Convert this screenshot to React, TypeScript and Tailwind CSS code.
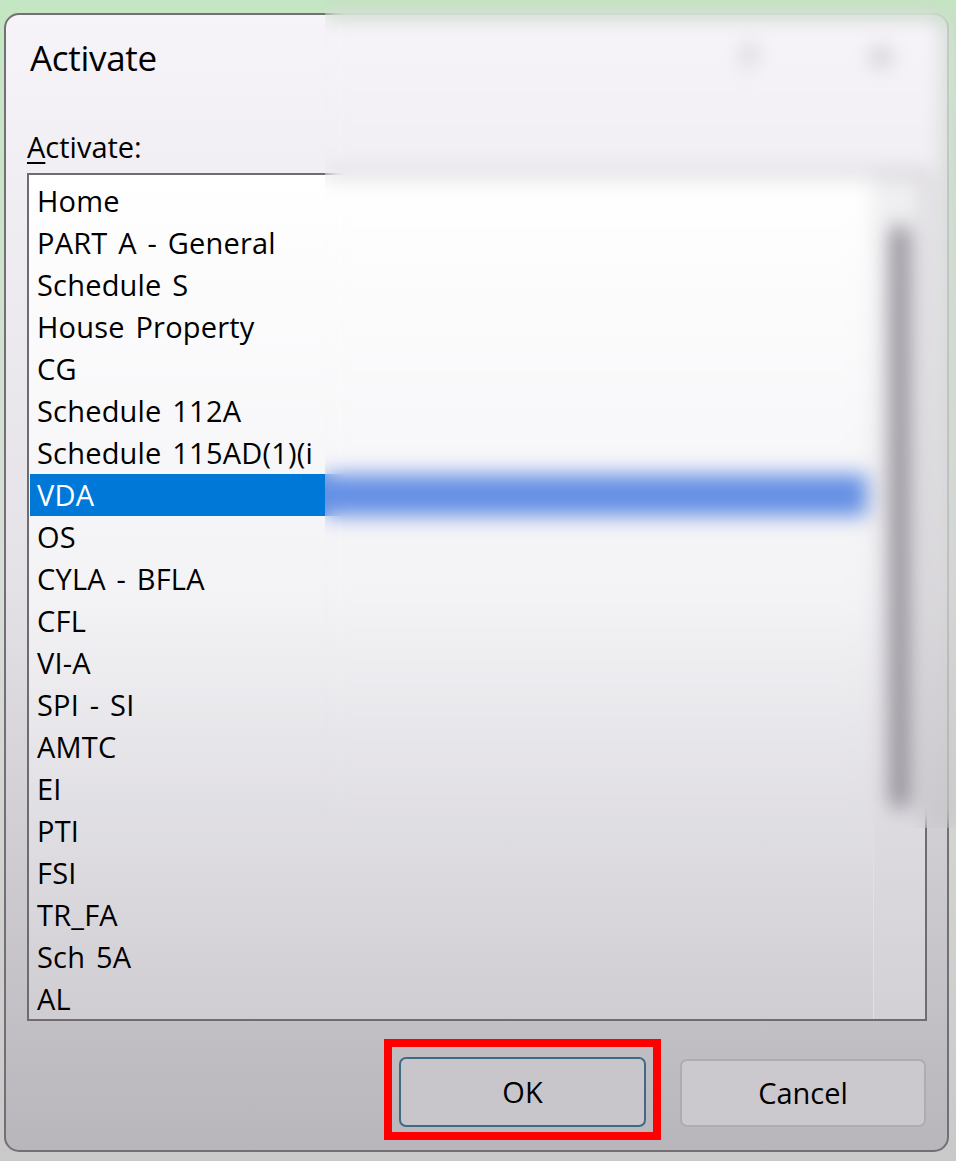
import { X } from 'lucide-react'

const sheets = [
  'Home',
  'PART A - General',
  'Schedule S',
  'House Property',
  'CG',
  'Schedule 112A',
  'Schedule 115AD(1)(i',
  'VDA',
  'OS',
  'CYLA - BFLA',
  'CFL',
  'VI-A',
  'SPI - SI',
  'AMTC',
  'EI',
  'PTI',
  'FSI',
  'TR_FA',
  'Sch 5A',
  'AL',
]

const selected = 'VDA'

export default function App() {
  return (
    <div
      className="relative h-[1161px] w-[956px] overflow-hidden bg-gradient-to-b from-[#c4e6c2] via-[#d9ddd8] to-[#c9c9c9] pt-[13px] pl-[4px] text-black"
      style={{ fontFamily: '"Open Sans", "Noto Sans", sans-serif' }}
    >
      {/* dialog */}
      <div className="flex h-[1139px] w-[945px] flex-col rounded-[15px] border-2 border-[#727074] bg-gradient-to-b from-[#f6f3f9] via-[#e4e2e6] to-[#b8b6bb]">
        {/* title bar */}
        <div className="flex h-[84px] items-center justify-between pl-[24px] pr-[50px]">
          <span className="text-[35px] leading-none tracking-[-0.3px]">Activate</span>
          <div className="flex items-center gap-[110px] text-[#666]">
            <span className="text-[30px] leading-none">?</span>
            <X className="h-8 w-8" strokeWidth={1.5} />
          </div>
        </div>

        <div className="pl-[21px] pt-[28px] text-[29px] leading-[40px]">
          <span className="underline decoration-2 underline-offset-4">A</span>ctivate:
        </div>

        {/* list box */}
        <div className="ml-[21px] mt-[6px] flex h-[848px] w-[900px] overflow-hidden border-2 border-[#6e6c70] bg-gradient-to-b from-[#ffffff] via-[#f3f2f5] to-[#cfcdd2]">
          <div className="flex-1 pt-[5px] pl-[1px]">
            {sheets.map((name) => (
              <div
                key={name}
                className={`h-[42px] pl-[7px] text-[29px] leading-[42px] tracking-[0.2px] [word-spacing:3px] whitespace-nowrap ${
                  name === selected
                    ? 'mr-[6px] bg-[linear-gradient(to_right,#0078d7_295px,#6590e4_295px)] text-white'
                    : ''
                }`}
              >
                {name}
              </div>
            ))}
          </div>
          {/* scrollbar */}
          <div className="flex w-[52px] justify-center border-l border-[#e2e0e4] bg-[#d9d7db]/40 pt-[50px]">
            <div className="h-[584px] w-[18px] rounded-full bg-[#8a8690]" />
          </div>
        </div>

        {/* buttons */}
        <div className="flex justify-end gap-[34px] pr-[21px] pt-[36px]">
          <div className="relative">
            <button className="flex h-[70px] w-[247px] items-center justify-center rounded-[7px] border-2 border-[#3f6a86] bg-[#c8c6ca] text-[29px]">
              OK
            </button>
            <div className="pointer-events-none absolute -top-[18px] -bottom-[13px] -left-[15px] -right-[15px] border-[8px] border-[#ff0000]" />
          </div>
          <button className="mt-[2px] flex h-[68px] w-[246px] items-center justify-center rounded-[7px] border-2 border-[#aeacb0] bg-[#cbc9cd] text-[29px]">
            Cancel
          </button>
        </div>
      </div>

      {/* privacy blur over the right part of the dialog */}
      <div className="pointer-events-none absolute left-[325px] top-0 h-[828px] w-[631px] backdrop-blur-[10px]" />
    </div>
  )
}
